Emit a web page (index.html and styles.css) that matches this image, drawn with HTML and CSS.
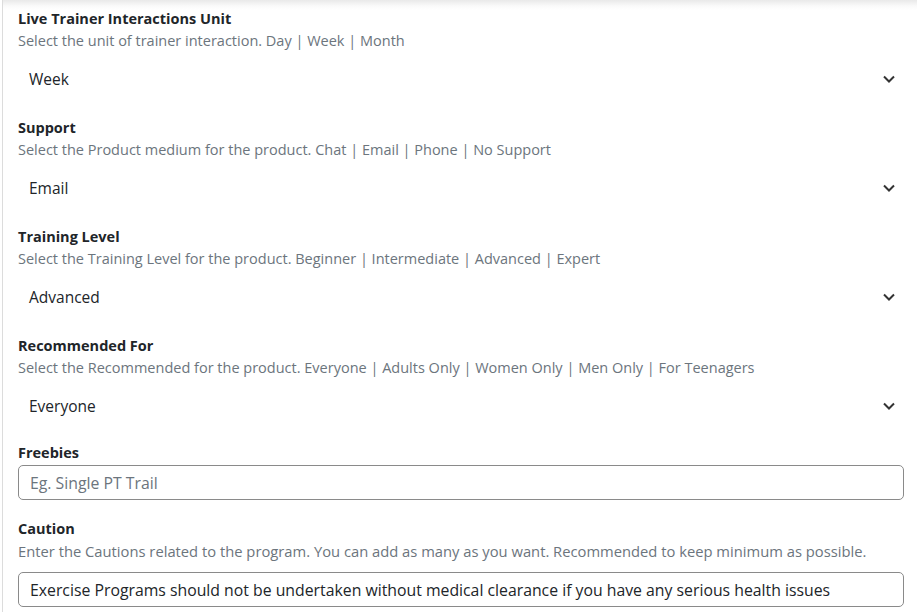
FILE: index.html
```html
<!DOCTYPE html>
<html lang="en">
<head>
<meta charset="utf-8">
<title>Product form</title>
<link rel="stylesheet" href="styles.css">
</head>
<body>
<div class="page">
  <form class="form">
    <div class="field">
      <div class="label">Live Trainer Interactions Unit</div>
      <div class="help">Select the unit of trainer interaction. Day | Week | Month</div>
      <div class="select"><span>Week</span><svg class="chev" width="12" height="8" viewBox="0 0 12 8"><path d="M1 1.5 L6 6.5 L11 1.5" fill="none" stroke="#333" stroke-width="2"/></svg></div>
    </div>
    <div class="field">
      <div class="label">Support</div>
      <div class="help">Select the Product medium for the product. Chat | Email | Phone | No Support</div>
      <div class="select"><span>Email</span><svg class="chev" width="12" height="8" viewBox="0 0 12 8"><path d="M1 1.5 L6 6.5 L11 1.5" fill="none" stroke="#333" stroke-width="2"/></svg></div>
    </div>
    <div class="field">
      <div class="label">Training Level</div>
      <div class="help">Select the Training Level for the product. Beginner | Intermediate | Advanced | Expert</div>
      <div class="select"><span>Advanced</span><svg class="chev" width="12" height="8" viewBox="0 0 12 8"><path d="M1 1.5 L6 6.5 L11 1.5" fill="none" stroke="#333" stroke-width="2"/></svg></div>
    </div>
    <div class="field">
      <div class="label">Recommended For</div>
      <div class="help">Select the Recommended for the product. Everyone | Adults Only | Women Only | Men Only | For Teenagers</div>
      <div class="select"><span>Everyone</span><svg class="chev" width="12" height="8" viewBox="0 0 12 8"><path d="M1 1.5 L6 6.5 L11 1.5" fill="none" stroke="#333" stroke-width="2"/></svg></div>
    </div>
    <div class="field field-text">
      <div class="label">Freebies</div>
      <div class="input placeholder">Eg. Single PT Trail</div>
    </div>
    <div class="field field-text field-caution">
      <div class="label">Caution</div>
      <div class="help">Enter the Cautions related to the program. You can add as many as you want. Recommended to keep minimum as possible.</div>
      <div class="input">Exercise Programs should not be undertaken without medical clearance if you have any serious health issues</div>
    </div>
  </form>
</div>
</body>
</html>
```
FILE: styles.css
```css
html, body {
  margin: 0;
  padding: 0;
  height: 100%;
  overflow: hidden;
}
body {
  background: #fff;
  font-family: "Open Sans", "Noto Sans", sans-serif;
  color: #212529;
}
.page {
  margin-left: 2px;
  border-left: 1px solid #dcdcdc;
  min-height: 100%;
  background: linear-gradient(to bottom, #e9e9e9 0px, #fafafa 6px, #fff 10px);
}
.form {
  padding: 8px 13px 0 15px;
  display: flex;
  flex-direction: column;
  gap: 19px;
}
.field {
  display: flex;
  flex-direction: column;
}
.field-text {
  margin-top: -2px;
}
.field-caution {
  margin-top: -1px;
}
.label {
  font-weight: 700;
  font-size: 14.5px;
  line-height: 22px;
  color: #212529;
}
.help {
  font-size: 14.5px;
  line-height: 22px;
  color: #6c757d;
  margin-bottom: 8px;
}
.field-text .help {
  font-size: 14.75px;
  line-height: 23px;
}
.select {
  height: 38px;
  display: flex;
  align-items: center;
  justify-content: space-between;
  padding: 0 9px 0 11px;
  font-size: 15.5px;
  color: #212529;
}
.chev {
  display: block;
}
.input {
  height: 35px;
  box-sizing: border-box;
  border: 1px solid #8a8a8a;
  border-radius: 5px;
  padding: 0 11px;
  display: flex;
  align-items: center;
  font-size: 15.8px;
  color: #212529;
  margin-top: 1px;
}
.input.placeholder {
  color: #6c757d;
}
```
